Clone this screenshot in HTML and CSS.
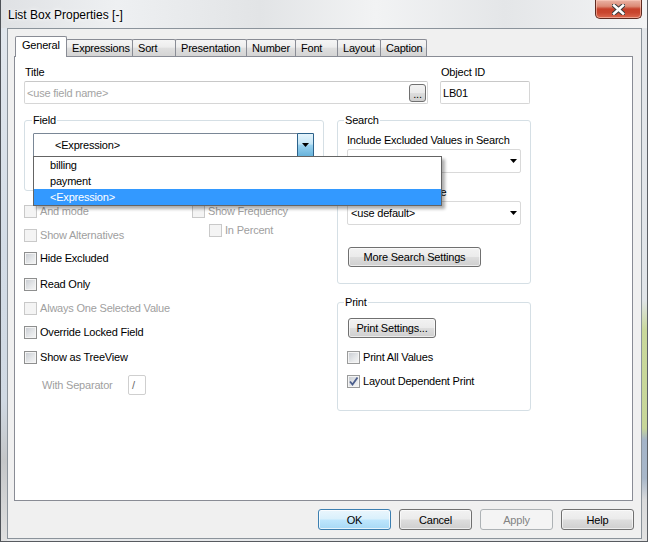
FILE: index.html
```html
<!DOCTYPE html>
<html>
<head>
<meta charset="utf-8">
<title>List Box Properties</title>
<link rel="stylesheet" href="styles.css">
</head>
<body>
<div class="window">
  <div class="titlebar">
    <span class="title">List Box Properties [-]</span>
    <div class="close">
      <svg width="13" height="11" viewBox="0 0 13 11">
        <path d="M2 1.5 L11 9.5 M11 1.5 L2 9.5" stroke="#3b3b3b" stroke-width="4.6" stroke-linecap="square" fill="none"/>
        <path d="M2 1.5 L11 9.5 M11 1.5 L2 9.5" stroke="#ffffff" stroke-width="2.6" stroke-linecap="square" fill="none"/>
      </svg>
    </div>
  </div>
  <div class="client">
    <div class="tabs">
      <div class="tab sel">General</div>
      <div class="tab">Expressions</div>
      <div class="tab">Sort</div>
      <div class="tab">Presentation</div>
      <div class="tab">Number</div>
      <div class="tab">Font</div>
      <div class="tab">Layout</div>
      <div class="tab">Caption</div>
    </div>
    <div class="panel">
      <div class="toprow">
        <div class="title-block">
          <div class="label">Title</div>
          <div class="textbox">
            <span class="placeholder">&lt;use field name&gt;</span>
            <div class="dots">...</div>
          </div>
        </div>
        <div class="objid-block">
          <div class="label">Object ID</div>
          <div class="textbox">LB01</div>
        </div>
      </div>
      <div class="columns">
        <div class="col-left">
          <fieldset class="group field-group">
            <legend>Field</legend>
            <div class="combo field-combo">
              <span class="combo-text">&lt;Expression&gt;</span>
              <div class="combo-btn">
                <svg width="7" height="4" viewBox="0 0 7 4"><path d="M0 0 H7 L3.5 4 Z" fill="#000"/></svg>
              </div>
              <div class="droplist">
                <div class="item">billing</div>
                <div class="item">payment</div>
                <div class="item hl">&lt;Expression&gt;</div>
              </div>
            </div>
          </fieldset>
          <div class="pair">
            <div class="pair-left">
              <div class="check dis"><span class="box"></span>And mode</div>
              <div class="check dis"><span class="box"></span>Show Alternatives</div>
            </div>
            <div class="pair-right">
              <div class="check dis"><span class="box"></span>Show Frequency</div>
              <div class="check dis sub"><span class="box"></span>In Percent</div>
            </div>
          </div>
          <div class="check up1"><span class="box"></span>Hide Excluded</div>
          <div class="check down2"><span class="box"></span>Read Only</div>
          <div class="check dis"><span class="box"></span>Always One Selected Value</div>
          <div class="check"><span class="box"></span>Override Locked Field</div>
          <div class="check down1"><span class="box"></span>Show as TreeView</div>
          <div class="sep-row">
            <span class="sep-label">With Separator</span>
            <div class="sep-input">/</div>
          </div>
        </div>
        <div class="col-right">
          <fieldset class="group search-group">
            <legend>Search</legend>
            <div class="label-s">Include Excluded Values in Search</div>
            <div class="combo s-combo">
              <span class="combo-text">&lt;use default&gt;</span>
              <svg class="arrow" width="7" height="4" viewBox="0 0 7 4"><path d="M0 0 H7 L3.5 4 Z" fill="#000"/></svg>
            </div>
            <div class="label-s second">Default Search Mode</div>
            <div class="combo s-combo">
              <span class="combo-text">&lt;use default&gt;</span>
              <svg class="arrow" width="7" height="4" viewBox="0 0 7 4"><path d="M0 0 H7 L3.5 4 Z" fill="#000"/></svg>
            </div>
            <div class="btn more-btn">More Search Settings</div>
          </fieldset>
          <fieldset class="group print-group">
            <legend>Print</legend>
            <div class="btn print-btn">Print Settings...</div>
            <div class="check first"><span class="box"></span>Print All Values</div>
            <div class="check"><span class="box checked">
              <svg width="11" height="11" viewBox="0 0 11 11"><path d="M2 5.5 L4.5 8.5 L9.5 1.5" stroke="#4a5d8c" stroke-width="1.8" fill="none"/></svg>
            </span>Layout Dependent Print</div>
          </fieldset>
        </div>
      </div>
    </div>
    <div class="buttons">
      <div class="btn dlg default">OK</div>
      <div class="btn dlg">Cancel</div>
      <div class="btn dlg disabled">Apply</div>
      <div class="btn dlg">Help</div>
    </div>
  </div>
</div>
</body>
</html>
```

FILE: styles.css
```css
* { box-sizing: border-box; }
html, body { margin: 0; padding: 0; }
body {
  width: 648px;
  height: 542px;
  overflow: hidden;
  font-family: "Liberation Sans", Arial, sans-serif;
  font-size: 11px;
  letter-spacing: -0.2px;
  color: #000;
  background: #e8ebee;
}
.window {
  width: 648px;
  height: 542px;
  display: flex;
  flex-direction: column;
  border-left: 1px solid #4e5258;
  border-right: 1px solid #5c6066;
  border-bottom: 1px solid #585b60;
  background:
    linear-gradient(90deg, #dfe1e4 0, #eef0f2 18%, #e2e4e6 40%, #f2f3f4 58%, #e4e6e8 78%, #f3f4f5 100%) top / 100% 28px no-repeat,
    linear-gradient(180deg, #e4e7ea 0, #e0e4e8 300px, #c9d89b 330px, #c7d699 428px, #a4b4c8 440px, #a8b7c9 478px, #d9dadb 500px, #e2e2e2 100%) right / 6px 100% no-repeat,
    linear-gradient(180deg, #e3e8ee 0, #d3dce6 250px, #d0d9e3 400px, #c4c6c8 460px, #e0e0e0 100%) left / 6px 100% no-repeat,
    #e6e8ea;
}
.titlebar {
  height: 28px;
  display: flex;
  justify-content: space-between;
  align-items: flex-start;
}
.title {
  margin-left: 7px;
  margin-top: 1px;
  line-height: 28px;
  font-size: 12px;
  letter-spacing: 0;
  color: #000;
  text-shadow: 0 0 6px #fff, 0 0 3px #fff;
}
.close {
  width: 47px;
  height: 19px;
  margin-right: 5px;
  border: 1px solid #5e2a20;
  border-top: none;
  border-radius: 0 0 5px 5px;
  background: linear-gradient(180deg, #eab4a5 0, #dc8b76 35%, #c6412a 50%, #c9462e 70%, #db6a50 100%);
  box-shadow: inset 0 0 0 1px rgba(255, 210, 195, 0.55);
  display: flex;
  align-items: center;
  justify-content: center;
}
.client {
  height: 511px;
  margin: 0 5px 0 6px;
  border: 1px solid #8b939b;
  background: #f0f0f0;
  display: flex;
  flex-direction: column;
}
.tabs {
  display: flex;
  align-items: flex-end;
  height: 20px;
  margin: 7px 0 0 7px;
  position: relative;
  z-index: 1;
}
.tab {
  height: 17px;
  line-height: 16px;
  padding-left: 5px;
  margin-left: -1px;
  border: 1px solid #898c95;
  border-bottom: none;
  border-radius: 2px 2px 0 0;
  background: linear-gradient(180deg, #f5f5f5 0, #ededed 45%, #dfdfdf 50%, #d4d4d4 100%);
  white-space: nowrap;
}
.tab.sel {
  height: 21px;
  line-height: 17px;
  margin-left: 0;
  margin-bottom: -1px;
  background: #fff;
  position: relative;
  z-index: 2;
  padding-left: 6px;
}
.tab:nth-child(1) { width: 52px; }
.tab:nth-child(2) { width: 67px; }
.tab:nth-child(3) { width: 44px; }
.tab:nth-child(4) { width: 72px; }
.tab:nth-child(5) { width: 50px; }
.tab:nth-child(6) { width: 43px; }
.tab:nth-child(7) { width: 44px; }
.tab:nth-child(8) { width: 47px; }

.panel {
  height: 445px;
  margin: 0 8px 0 6px;
  border: 1px solid #898c95;
  background: #fff;
  padding: 8px 0 0 9px;
}
.toprow {
  display: flex;
  gap: 12px;
}
.title-block { width: 404px; }
.objid-block { width: 90px; }
.label {
  height: 13px;
  line-height: 14px;
  padding-left: 1px;
  margin-bottom: 3px;
}
.textbox {
  height: 23px;
  border: 1px solid #d6d6d6;
  border-top-color: #c8c8c8;
  border-radius: 2px;
  background: #fff;
  display: flex;
  align-items: center;
  padding-left: 2px;
}
.placeholder { color: #a3a3a3; }
.dots {
  width: 17px;
  height: 18px;
  margin-left: auto;
  margin-right: 1px;
  border: 1px solid #707070;
  border-radius: 3px;
  background: linear-gradient(180deg, #f2f2f2 0, #ebebeb 48%, #dddddd 52%, #cfcfcf 100%);
  line-height: 18px;
  text-align: center;
  font-size: 11px;
}
.columns {
  display: flex;
  gap: 13px;
  margin-top: 10px;
}
.col-left { width: 300px; }
.col-right { width: 194px; }
.group {
  margin: 0;
  border: 1px solid #d5dfe5;
  border-radius: 3px;
  min-width: 0;
}
.group legend {
  padding: 0 1px;
  line-height: 13px;
  font-size: 11px;
}
.field-group {
  width: 300px;
  padding: 6px 9px 33px 8px;
}
.field-group legend { margin-left: -1px; }
.combo {
  height: 24px;
  border: 1px solid #d9d9d9;
  border-radius: 2px;
  background: #fff;
  display: flex;
  align-items: center;
  position: relative;
}
.field-combo {
  border-color: #7a8796;
  border-radius: 1px;
}
.field-combo .combo-text { padding-left: 21px; }
.combo-btn {
  margin-left: auto;
  width: 17px;
  height: 24px;
  margin-top: -1px;
  margin-bottom: -1px;
  margin-right: -1px;
  border: 1px solid #2c628b;
  border-radius: 1px;
  background: linear-gradient(180deg, #e5f4fc 0, #c4e5f6 45%, #98d1ef 52%, #68b3db 100%);
  display: flex;
  align-items: center;
  justify-content: center;
}
.droplist {
  position: absolute;
  top: 100%;
  left: -1px;
  width: 409px;
  border: 1px solid #646464;
  background: #fff;
  box-shadow: 3px 3px 3px rgba(0, 0, 0, 0.32);
  z-index: 5;
}
.item {
  height: 16px;
  line-height: 17px;
  padding-left: 16px;
}
.item.hl {
  background: #3399ff;
  color: #fff;
}
.pair {
  display: flex;
  margin-top: 8px;
}
.pair-left { width: 168px; }
.check {
  display: flex;
  align-items: center;
  height: 24px;
  white-space: nowrap;
}
.check.dis { color: #a0a0a0; }
.check.sub {
  height: 14px;
  margin-left: 17px;
}
.check.up1 { margin-top: -1px; }
.check.down2 { margin-top: 2px; }
.check.down1 { margin-top: 1px; }
.box {
  width: 13px;
  height: 13px;
  margin-right: 3px;
  flex: none;
  border: 1px solid #8e8f8f;
  background: linear-gradient(135deg, #c6cad0 0, #e6e8ea 60%, #f6f6f6 100%);
  box-shadow: inset 0 0 0 1px #f4f4f4;
  display: flex;
  align-items: center;
  justify-content: center;
}
.check.dis .box {
  border-color: #c9c9c9;
  background: #f4f4f4;
  box-shadow: none;
}
.box.checked svg { display: block; }
.sep-row {
  display: flex;
  align-items: center;
  height: 21px;
  margin-top: 5px;
}
.sep-label {
  color: #a0a0a0;
  margin-left: 18px;
  width: 86px;
}
.sep-input {
  width: 18px;
  height: 20px;
  border: 1px solid #cfcfcf;
  border-radius: 2px;
  background: #fff;
  color: #6a6a6a;
  line-height: 18px;
  padding-left: 3px;
}
.search-group {
  width: 194px;
  padding: 6px 9px 16px 9px;
}
.search-group legend, .print-group legend { margin-left: -3px; }
.label-s {
  height: 13px;
  line-height: 14px;
  white-space: nowrap;
}
.label-s.second { margin-top: 12px; }
.s-combo { margin-top: 3px; }
.s-combo .combo-text { padding-left: 3px; }
.s-combo .arrow {
  margin-left: auto;
  margin-right: 3px;
}
.btn {
  height: 20px;
  border: 1px solid #707070;
  border-radius: 3px;
  background: linear-gradient(180deg, #f2f2f2 0, #ebebeb 48%, #dddddd 52%, #cfcfcf 100%);
  box-shadow: inset 0 0 0 1px rgba(255, 255, 255, 0.6);
  display: flex;
  align-items: center;
  justify-content: center;
  white-space: nowrap;
}
.more-btn {
  width: 133px;
  margin: 22px 0 0 1px;
}
.print-group {
  width: 194px;
  margin-top: 12px;
  padding: 9px 9px 17px 9px;
}
.print-btn {
  width: 88px;
  margin-left: 1px;
}
.print-group .check.first { margin-top: 7px; }
.print-group .box {
  border-color: #9a9b9b;
}
.buttons {
  display: flex;
  justify-content: flex-end;
  gap: 8px;
  margin-top: 8px;
  padding-right: 7px;
}
.btn.dlg {
  width: 73px;
  height: 21px;
}
.btn.default {
  border-color: #3c7fb1;
  background: linear-gradient(180deg, #eaf6fd 0, #d9f0fc 48%, #bee6fd 52%, #a7d9f5 100%);
  box-shadow: inset 0 0 0 1px rgba(255, 255, 255, 0.7);
}
.btn.disabled {
  border-color: #adb2b5;
  background: #f4f4f4;
  color: #838383;
  box-shadow: none;
}
```
